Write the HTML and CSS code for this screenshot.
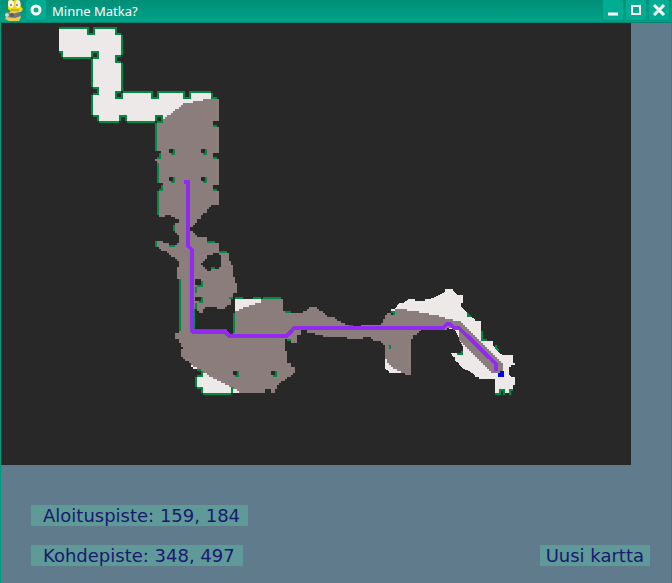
FILE: index.html
```
<!DOCTYPE html>
<html lang="fi">
<head>
<meta charset="utf-8">
<title>Minne Matka?</title>
<link rel="stylesheet" href="styles.css">
</head>
<body>
<div class="window">
  <header class="titlebar">
    <svg class="app-icon" viewBox="0 0 20 22" aria-hidden="true">
      <path d="M5 1Q7-1 10 1Q15-2 17 2L18 7L20 9L18 12H9L5 9Z" fill="#f5d70c"/>
      <path d="M5 13L2 19L6 21H16L18 17L15 11H8Z" fill="#e8c95a"/>
      <ellipse cx="8" cy="4" rx="3" ry="4" fill="#f6f3dc"/>
      <ellipse cx="15" cy="4" rx="2.500" ry="4" fill="#f6f3dc"/>
      <circle cx="8" cy="5" r="1" fill="#777"/>
      <circle cx="14" cy="5" r="1" fill="#777"/>
      <path d="M8 10H16" stroke="#a58a12"/>
      <path d="M2 13L5 12L9 14L16 12L18 16L12 18L3 17Z" fill="#747979"/>
      <circle cx="4" cy="15" r="2" fill="#d5d5cb"/>
      <circle cx="9" cy="15" r="2" fill="#54605e"/>
      <circle cx="16" cy="15" r="1" fill="#b64f47"/>
    </svg>
    <button class="title-button" type="button" aria-label="Valikko">
      <svg viewBox="0 0 20 20"><circle cx="10" cy="10" r="4" fill="none" stroke="#fff" stroke-width="3"/></svg>
    </button>
    <h1 class="title">Minne Matka?</h1>
    <div class="controls">
      <button class="title-button" type="button" aria-label="Pienennä">
        <svg viewBox="0 0 20 20"><path d="M5 14H15" stroke="#fff" stroke-width="3"/></svg>
      </button>
      <button class="title-button" type="button" aria-label="Suurenna">
        <svg viewBox="0 0 20 20"><path d="M6 6H14V14H6Z" fill="none" stroke="#fff" stroke-width="2"/></svg>
      </button>
      <button class="title-button" type="button" aria-label="Sulje">
        <svg viewBox="0 0 20 20"><path d="M5 5L15 15M15 5L5 15" stroke="#fff" stroke-width="3"/></svg>
      </button>
    </div>
  </header>
  <main class="content">
    <svg class="map" viewBox="1 23 630 442" role="img" aria-label="Kartta" shape-rendering="crispEdges">
      <rect class="rock" x="1" y="23" width="630" height="442"/>
      <g class="floor">
        <path d="M59 29H87V35H95V29H115V35H121V55H115V63H121V91H115V99H123V93H151V99H159V93H183V99H191V93H211V99H213V121H155V115H155V121H127V115H119V121H99V115H93V95H99V87H93V59H99V51H91V57H63V51H59Z"/>
        <path d="M235 299H263V303L235 313Z"/>
        <path d="M191 365H195V367H197V369H193V367H191ZM203 371L245 391V393H203V389H197V377H203Z"/>
        <path d="M385 359H389L401 371V373H389V371L385 369Z"/>
        <path d="M391 311V309H395L399 303H403L409 299H415V301H425V299H429L435 297L443 293L445 291V289H453V291L457 295H463V303H461V307L467 313V317H471L475 319V321H481V335L485 341H493V345L499 353L503 355H513V363H515V365H511V367H509V375L511 377H515V385H513V389H509V393H505V389H499V393H495V379H479V377H475V375L469 371L463 369L459 365V363L455 361V357H453L451 353H457V355H463V347L455 330L391 315Z"/>
      </g>
      <g class="visited">
        <path d="M163 119H165V117H167V115H171V113H173V111H175V109H179V107H181V105H183V103H193V101H203V99H219V121H213V127H219V153H213V159H219V185H213V191H219V205H211V207H209V209H207V213H203V215H201V219H197V223H195V225H193V227H190V231H193V233H195V235H197V237H207V243H219V251H227V253H229V261H231V265H233V277H235V283H237V293H233V299H231V305H227V307H225V309H217V307H205V309H203V313H199V311H197V307H195V330H225V334H233V313H235V311H239V309H243V307H249V305H255V303H261V299H283V311H285V313H303V311H307V309H309V307H317V309H319V311H323V313H325V315H327V317H335V319H337V321H341V323H345V325H349V327H361V325H381V323H383V319H385V315H387V313H391V311H395V309H407V311H419V313H429V315H439V317H445V319H453V321H461V323H463V325H465V327H467V329H469V331H471V333H473V335H475V337H477V339H479V341H481V343H483V345H485V347H487V349H489V351H491V353H493V355H495V357H497V359H499V361H501V363H503V373H491V371H489V369H487V367H485V365H483V363H481V361H479V359H477V357H475V355H473V353H471V351H469V349H467V347H465V345H463V343H461V341H459V330H455V328H447V330H443V328H421V331H419V333H417V335H413V339H411V375H405V373H401V371H397V369H393V367H391V365H389V363H387V359H385V345H383V343H381V341H373V339H371V337H363V339H347V337H323V335H315V333H307V330H301V335H297V343H291V341H289V339H285V351H287V363H291V367H295V373H293V375H291V377H287V379H285V381H281V383H279V385H277V389H275V393H271V389H265V393H239V391H237V389H231V387H229V385H225V383H221V381H217V379H213V377H209V375H207V373H203V371H201V369H197V367H193V365H191V363H189V361H185V359H183V357H181V349H183V347H181V343H179V339H175V333H179V279H177V267H179V261H177V259H175V257H171V255H169V253H167V251H161V249H159V247H157V241H163V243H169V245H177V243H179V235H177V233H175V231H173V225H175V223H179V219H175V217H171V215H165V217H159V215H157V191H163V183H157V161H155V159H161V151H155V123H163Z"/>
      </g>
      <path class="rock" d="M157 117h4v4h-4zM207 255H213V253H219V255H221V267H219V269H211V271H207V269H205V267H203V265H201V263H203V261H205V259H207ZM169 149h4v4h-4zM201 149h4v4h-4zM169 177h4v4h-4zM201 177h4v4h-4zM233 371h4v4h-4zM271 371h4v4h-4zM195 279h6v6h-6zM195 297h6v4h-6zM391 313h2v2h-2z"/>
      <path class="wall" d="M60 28H88V34H94V28H116V34H120M122 36V54M120 56H116V62H120M122 64V90M120 92H116V98H122V94M124 92H152V98H158V92H184V98H190V92H210M212 94V98H216M60 52H62V56M64 58H90M92 56V52H98V58H94M92 60V86M94 88H98V94H94M92 96V114M94 116H98V120M100 122H118M120 120V116H126V120M128 122H154M156 120V116H162V122H158M156 124V150M160 154V158H158M156 160M214 126H216M214 158H216M214 190H216M174 150V154H172M206 150V154H204M174 178V182H172M206 178V182H204M158 164V182M160 184M162 186V190H160M158 192V214M174 226V230M156 242V246M170 246H174M176 244M208 242H214M220 252H226M212 268H214M180 280V330M202 282V286H198M196 288V292M202 298V302H200M196 304V308M194 310V330H226M230 298H232M236 298H242M254 298H260M264 298H280M234 314V332M286 312H290M198 370H200M202 372V376H198M196 378V386M198 388H202V392M204 394H230M232 388V392M238 372V376H236M276 372V376H274M238 390M270 390M288 340H290M350 326H352M392 312H394V314M392 316M390 346V348M450 328M468 314V316H470M482 332V340H486M496 346V348L498 350M458 354H462V352M496 394H498M500 394V390H504V394M510 394V390H512"/>
      <path class="route" d="M184 182H188V246L192 250V331L193 332H226L229 336H287L294 328H443L447 324H450L454 328H459L496 364V371"/>
      <path class="goal" d="M498 373H500V371H504V377H498Z"/>
    </svg>
    <section class="panel">
      <div class="points">
        <output class="tag">Aloituspiste: 159, 184</output>
        <output class="tag">Kohdepiste: 348, 497</output>
      </div>
      <button class="new-map" type="button">Uusi kartta</button>
    </section>
  </main>
</div>
</body>
</html>
```
FILE: styles.css
```
* {
  box-sizing: border-box;
}

body {
  margin: 0;
  background: #607b8b;
}

button {
  border: 0;
  margin: 0;
  font: inherit;
}

.window {
  display: flex;
  flex-direction: column;
  min-height: 100vh;
  border: solid #009a80;
  border-width: 0 1px;
  background: #607b8b;
}

.titlebar {
  display: flex;
  height: 23px;
  padding: 0 2px 2px 2px;
  background: linear-gradient(#008f77, #00a389);
  border-bottom: 1px solid #00866f;
}

.app-icon {
  width: 20px;
  height: 22px;
  margin-right: 3px;
}

.title-button {
  width: 20px;
  height: 20px;
  padding: 0;
  border-radius: 2px;
  background: #00ad93;
  box-shadow: 0 0 0 1px #009780;
}

.title-button svg {
  display: block;
}

.title {
  flex: 1;
  margin: 0 0 0 6px;
  font: 13px/22px "Noto Sans", sans-serif;
  color: #fff;
}

.controls {
  display: flex;
  gap: 3px;
}

.content {
  flex: 1;
}

.map {
  display: block;
  width: calc(100% - 40px);
}

.rock {
  fill: #282828;
}

.floor {
  fill: #ede9e8;
}

.visited {
  fill: #8b7d7b;
}

.wall {
  fill: none;
  stroke: #008b45;
  stroke-width: 2;
  stroke-linecap: square;
}

.route {
  fill: none;
  stroke: #912cee;
  stroke-width: 4;
}

.goal {
  fill: #0000ff;
}

.panel {
  display: flex;
  justify-content: space-between;
  align-items: flex-end;
  padding: 40px 21px 17px 30px;
  font: 18px/21px "DejaVu Sans", sans-serif;
  color: #191970;
}

.points {
  display: flex;
  flex-direction: column;
  align-items: flex-start;
  gap: 19px;
}

.tag {
  padding: 0 8px 0 12px;
  background: #5f9a99;
}

.new-map {
  padding: 0 6px;
  background: #5f9a99;
  color: inherit;
}
```
